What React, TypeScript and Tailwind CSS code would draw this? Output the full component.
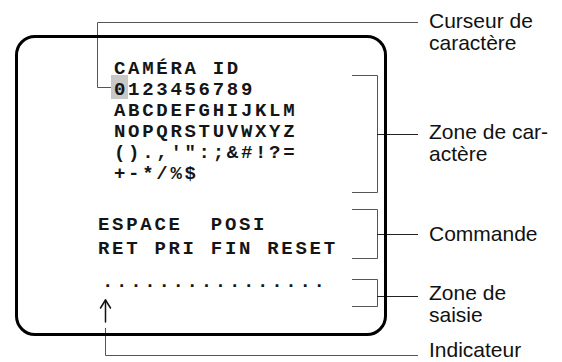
export default function App() {
  const charRows = [
    "CAMÉRA ID",
    null,
    "ABCDEFGHIJKLM",
    "NOPQRSTUVWXYZ",
    "().,'\":;&#!?=",
    "+-*/%$",
  ];

  return (
    <div className="relative flex items-start w-[562px] h-[362px] bg-white overflow-hidden">
      {/* leader lines and brackets */}
      <svg
        className="absolute inset-0 pointer-events-none"
        width="562"
        height="362"
        viewBox="0 0 562 362"
        fill="none"
      >
        <g stroke="#555" strokeWidth="1">
          <polyline points="418,22.5 97.5,22.5 97.5,87.5 111,87.5" />
          <polyline points="352,75.5 377.5,75.5 377.5,192.5 352,192.5" />
          <polyline points="352,209.5 377.5,209.5 377.5,258.5 352,258.5" />
          <polyline points="352,279.5 377.5,279.5 377.5,306.5 352,306.5" />
          <polyline points="105.5,328 105.5,355.5 418,355.5" />
        </g>
        <g stroke="#222" strokeWidth="1">
          <line x1="377" y1="134.5" x2="418" y2="134.5" />
          <line x1="377" y1="234.5" x2="418" y2="234.5" />
          <line x1="377" y1="296.5" x2="418" y2="296.5" />
        </g>
        <g stroke="#111" strokeWidth="1.5" strokeLinecap="round" strokeLinejoin="round">
          <line x1="105.5" y1="300" x2="105.5" y2="322" />
          <polyline points="100.5,308 105.5,300 110.5,308" />
        </g>
      </svg>

      {/* screen */}
      <div className="relative z-10 shrink-0 mt-[35px] ml-[15px] w-[372px] h-[301px] border-[3px] border-black rounded-[20px] font-['Liberation_Mono',monospace] font-bold text-[19px] tracking-[2.7px] text-[#151515]">
        <div className="pt-[21px] pl-[96px] leading-[21px]">
          {charRows.map((row, i) =>
            row === null ? (
              <div key={i} className="whitespace-pre">
                <span className="relative">
                  <span className="absolute -left-[3px] -top-[4px] w-[17px] h-[24px] bg-[#c8c8c8] -z-10" />
                  0
                </span>
                123456789
              </div>
            ) : (
              <div key={i} className="whitespace-pre">
                {row}
              </div>
            )
          )}
        </div>

        <div className="mt-[28px] pl-[80px] leading-[24px] whitespace-pre">
          <div>ESPACE  POSI</div>
          <div>RET PRI FIN RESET</div>
        </div>

        <div className="mt-[11px] pl-[84px] leading-[21px] whitespace-pre">
          ................
        </div>
      </div>

      {/* labels */}
      <div className="flex flex-col ml-[42px] pt-[10px] font-['Liberation_Sans',Arial,sans-serif] text-[21px] leading-[22px] text-[#111]">
        <div>
          Curseur de
          <br />
          caractère
        </div>
        <div className="mt-[67px]">
          Zone de car-
          <br />
          actère
        </div>
        <div className="mt-[58px]">Commande</div>
        <div className="mt-[37px]">
          Zone de
          <br />
          saisie
        </div>
        <div className="mt-[15px] leading-[18px]">Indicateur</div>
      </div>
    </div>
  );
}
